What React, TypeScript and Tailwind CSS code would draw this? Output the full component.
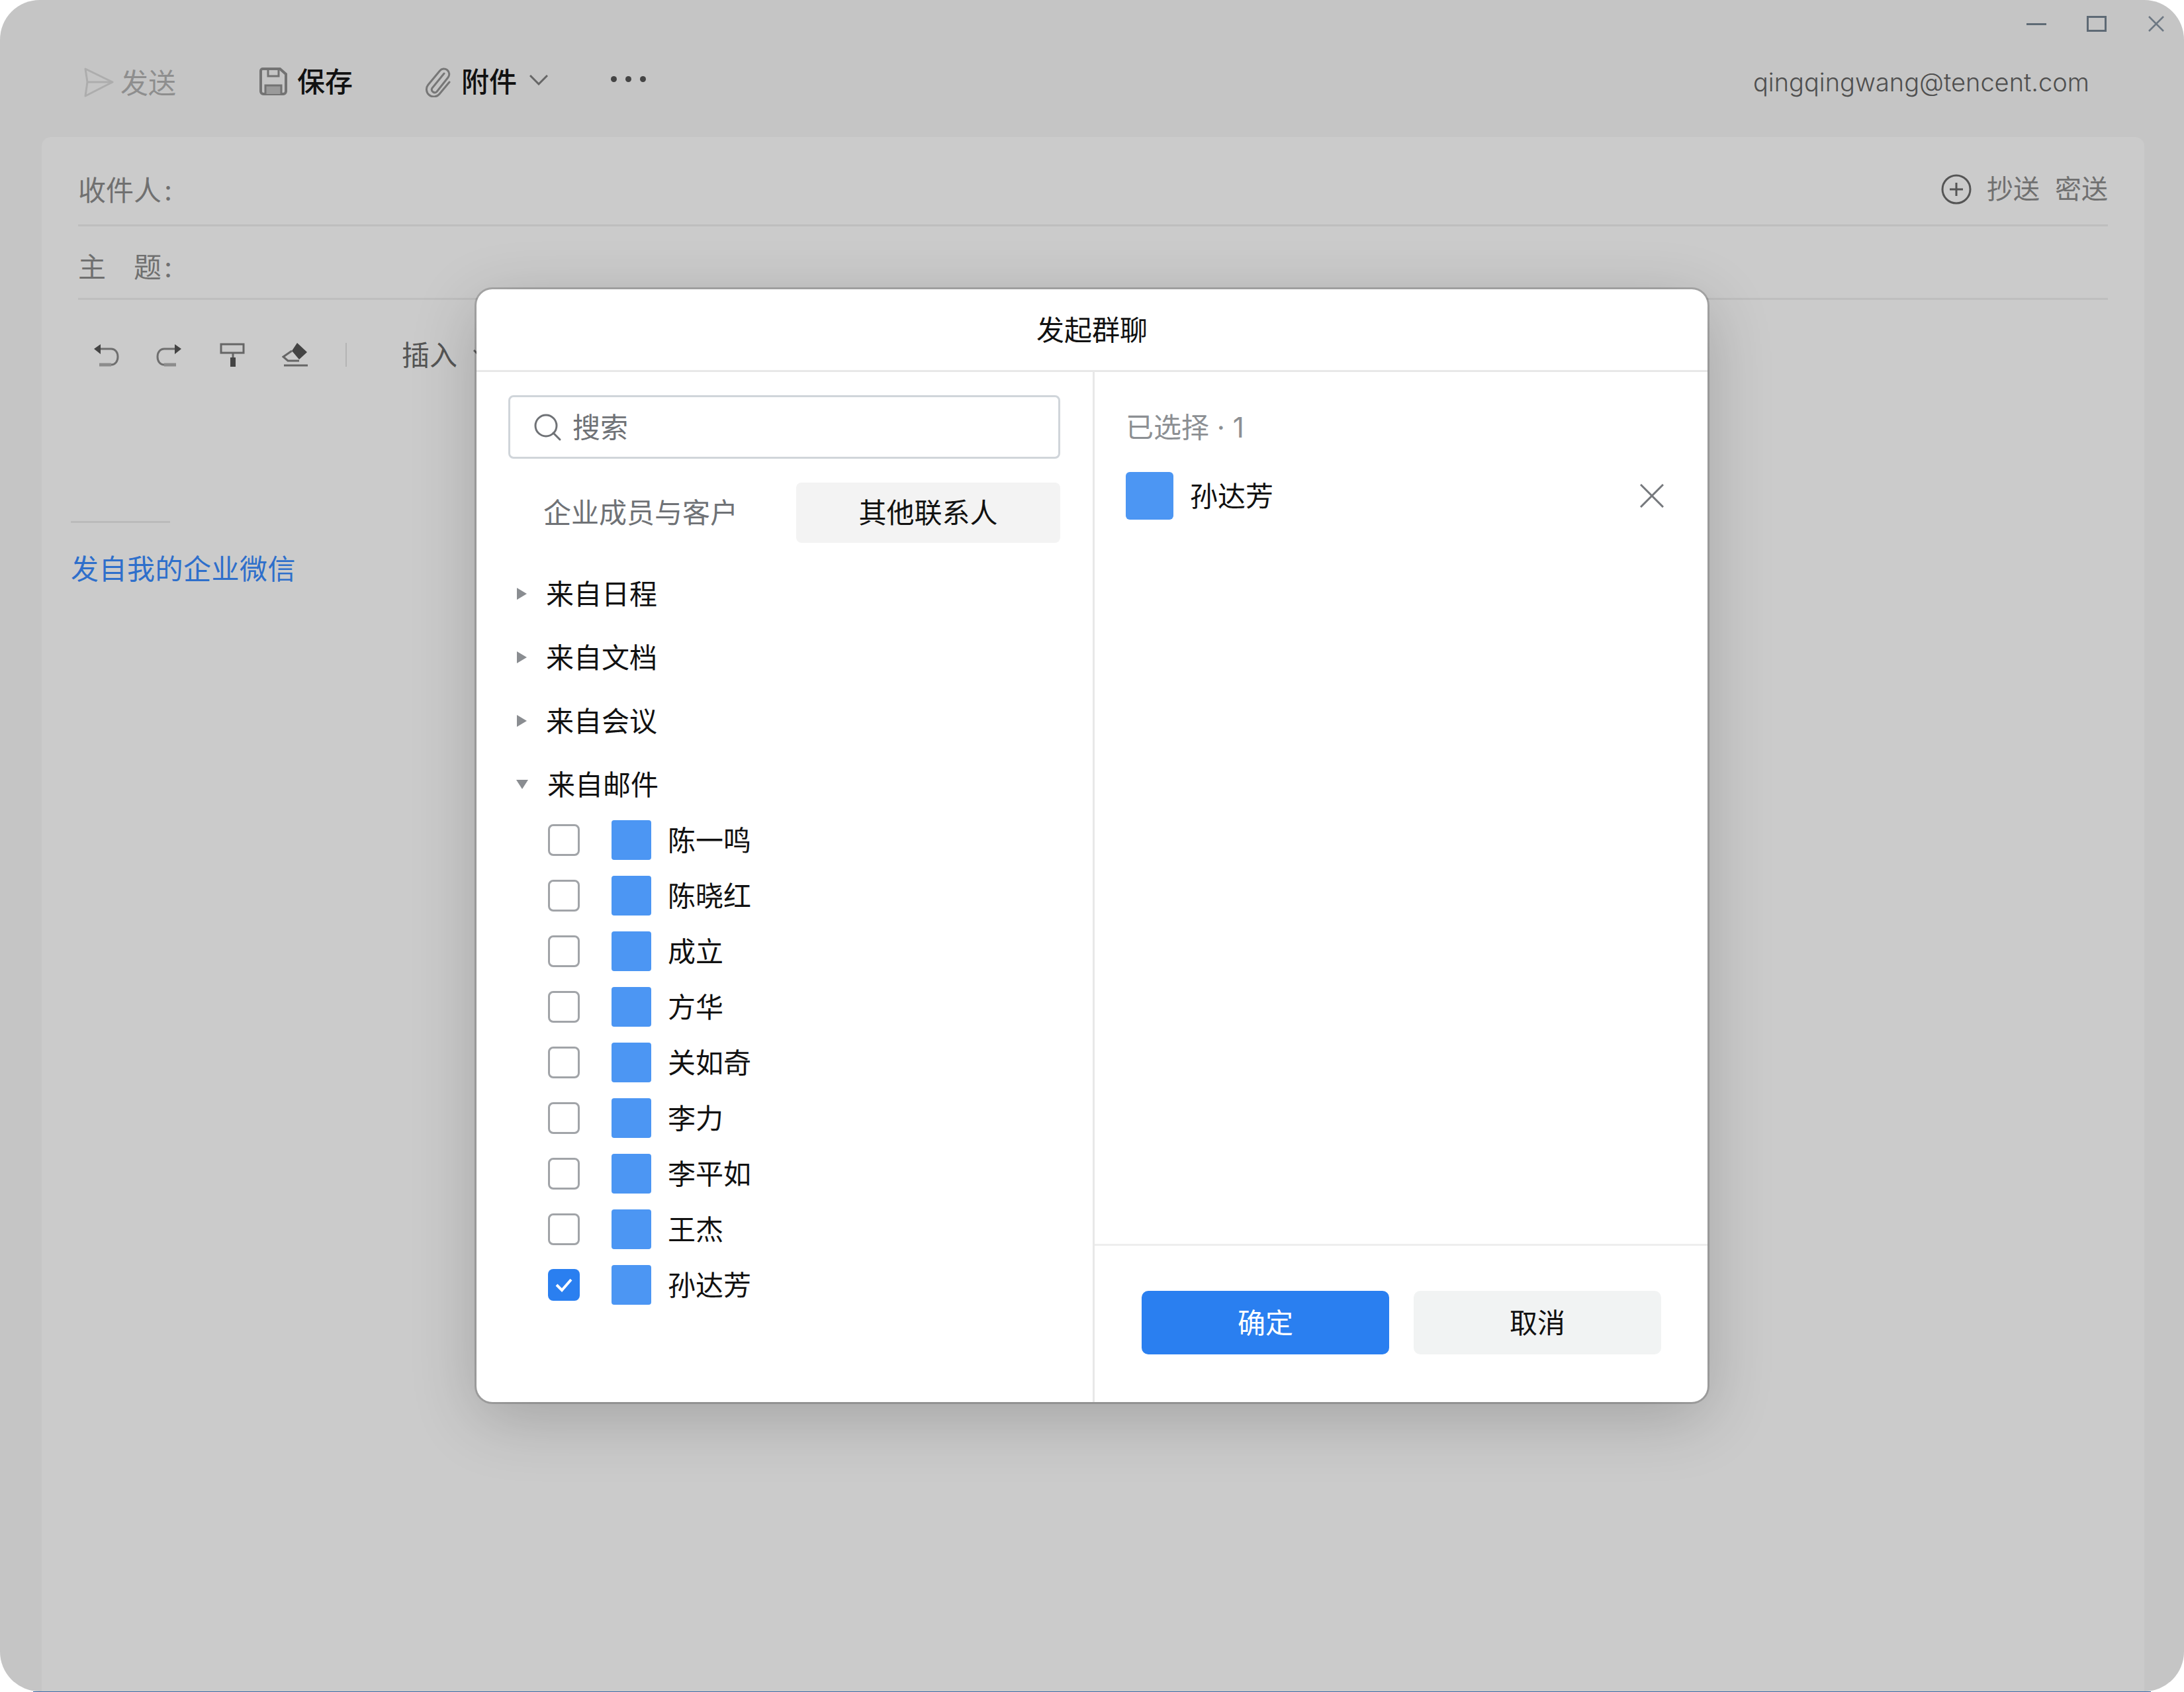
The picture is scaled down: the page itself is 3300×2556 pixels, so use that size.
const contacts = ["陈一鸣", "陈晓红", "成立", "方华", "关如奇", "李力", "李平如", "王杰", "孙达芳"];
const groups = ["来自日程", "来自文档", "来自会议"];

const SendIcon = () => (
  <svg width="46" height="46" viewBox="0 0 46 46" fill="none" stroke="#adadad" strokeWidth="3">
    <path d="M3 3 L44 23 L3 44 L6 23 Z" strokeLinejoin="round" />
    <path d="M6 23 H44" />
  </svg>
);

const SaveIcon = () => (
  <svg width="42" height="42" viewBox="0 0 42 42" fill="none" stroke="#737373" strokeWidth="4">
    <path d="M5 2 H31 L40 10 V36 a4 4 0 0 1 -4 4 H6 a4 4 0 0 1 -4 -4 V5 a3 3 0 0 1 3 -3 Z" />
    <path d="M13 2 V13 H29 V2" strokeWidth="3" />
    <path d="M9 40 V27 H33 V40" fill="#9a9a9a" strokeWidth="3" />
  </svg>
);

const ClipIcon = () => (
  <svg width="44" height="48" viewBox="0 0 44 48" fill="none" stroke="#777" strokeWidth="3" strokeLinecap="round">
    <path d="M31 12 L13 34 a4.5 4.5 0 0 0 7 5.5 L37 18 a8 8 0 0 0 -12.5 -10 L7 29 a11 11 0 0 0 17 14 L39 25" />
  </svg>
);

const Chevron = () => (
  <svg width="28" height="16" viewBox="0 0 28 16" fill="none" stroke="#666" strokeWidth="3">
    <path d="M1 1 L14 14 L27 1" />
  </svg>
);

const Undo = ({ flip }: { flip?: boolean }) => (
  <svg width="40" height="36" viewBox="0 0 40 36" fill="none" className={flip ? "-scale-x-100" : ""}>
    <path d="M12 9 H28 C34 9 38 14 38 21 C38 28 34 33 28 33" stroke="#6f6f6f" strokeWidth="3" />
    <path d="M28 33 H10" stroke="#8c8c8c" strokeWidth="5" />
    <path d="M2 9 L12 2 V17 Z" fill="#444" />
  </svg>
);

const PaintIcon = () => (
  <svg width="38" height="36" viewBox="0 0 38 36" fill="none" stroke="#666">
    <path d="M2 2 H36 V15 H2 Z" strokeWidth="3" />
    <path d="M20 15 V22" strokeWidth="3" />
    <path d="M20 22 V36" stroke="#444" strokeWidth="8" />
  </svg>
);

const EraserIcon = () => (
  <svg width="40" height="38" viewBox="0 0 40 38" fill="none">
    <path d="M15 13 L2 22 L9 28 H26" stroke="#666" strokeWidth="3" />
    <path d="M23 1 L38 15 L26 26 L15 13 Z" fill="#444" />
    <path d="M3 35 H39" stroke="#666" strokeWidth="3" />
  </svg>
);

const Box = ({ checked }: { checked?: boolean }) =>
  checked ? (
    <div className="w-[48px] h-[48px] rounded-[8px] bg-[#2a7ff0] flex items-center justify-center">
      <svg width="28" height="24" viewBox="0 0 28 24" fill="none" stroke="#fff" strokeWidth="4">
        <path d="M3 12 L11 20 L25 4" />
      </svg>
    </div>
  ) : (
    <div className="w-[48px] h-[48px] rounded-[8px] border-[3px] border-[#a1a4a8] bg-white" />
  );

export default function App() {
  return (
    <div className="relative w-[3300px] h-[2556px] overflow-hidden bg-white font-['Inter','Noto_Sans_CJK_SC',sans-serif]">
      <div className="h-[2555px] rounded-[60px] bg-[#c5c5c5] flex flex-col">
        {/* top toolbar */}
        <div className="relative h-[207px] shrink-0 flex items-start pt-[96px] pl-[126px] pr-[143px] text-[42px] leading-[52px]">
          <div className="flex items-center w-[266px] text-[#8e8e8e] gap-[10px]">
            <SendIcon />
            <span className="pt-[4px]">发送</span>
          </div>
          <div className="flex items-center w-[248px] text-[#111] gap-[15px]">
            <SaveIcon />
            <span className="pt-[2px] font-medium">保存</span>
          </div>
          <div className="flex items-center w-[283px] text-[#111] gap-[13px]">
            <ClipIcon />
            <span className="pt-[2px] font-medium">附件</span>
            <div className="-ml-[4px] -mt-[4px] pl-[10px]">
              <Chevron />
            </div>
          </div>
          <div className="flex gap-[13px] pt-[19px]">
            <span className="w-[9px] h-[9px] rounded-full bg-[#444]" />
            <span className="w-[9px] h-[9px] rounded-full bg-[#444]" />
            <span className="w-[9px] h-[9px] rounded-full bg-[#444]" />
          </div>
          <div className="ml-auto text-[#4f4f4f] text-[38px] font-light pt-[2px]">qingqingwang@tencent.com</div>
          <div className="absolute top-[24px] right-[30px] flex items-center">
            <span className="w-[30px] h-[3px] bg-[#5e6a75]" />
            <span className="ml-[61px] w-[30px] h-[24px] border-[3px] border-[#5e6a75]" />
            <svg className="ml-[63px]" width="24" height="24" viewBox="0 0 24 24" stroke="#6d7883" strokeWidth="2.5">
              <path d="M1 1 L23 23 M23 1 L1 23" />
            </svg>
          </div>
        </div>

        {/* compose panel */}
        <div className="flex-1 ml-[63px] mr-[60px] rounded-t-[14px] bg-[#cbcbcb] px-[55px] text-[42px] text-[#707070]">
          <div className="h-[135px] border-b-[3px] border-[#bebebe] flex items-center justify-between pt-[28px]">
            <span>
              收件人<span className="ml-[4px]">:</span>
            </span>
            <div className="flex items-center text-[40px] gap-[23px] -mt-[3px]">
              <svg width="46" height="46" viewBox="0 0 46 46" fill="none" stroke="#555" strokeWidth="3">
                <circle cx="23" cy="23" r="21" />
                <path d="M23 13 V33 M13 23 H33" />
              </svg>
              <span>抄送</span>
              <span>密送</span>
            </div>
          </div>
          <div className="h-[111px] border-b-[3px] border-[#bebebe] flex items-center pt-[14px] gap-[42px]">
            <span>主</span>
            <span>
              题<span className="ml-[4px]">:</span>
            </span>
          </div>
          <div className="h-[100px] flex items-center pt-[66px] gap-[56px] pl-[22px]">
            <Undo />
            <Undo flip />
            <PaintIcon />
            <EraserIcon />
            <span className="w-[2px] h-[36px] bg-[#b4b4b4]" />
            <div className="ml-[27px] flex items-center gap-[24px] text-[#555]">
              <span>插入</span>
              <Chevron />
            </div>
          </div>
          <div className="-ml-[11px] mt-[234px] w-[150px] h-[3px] bg-[#bbbbbb]" />
          <div className="-ml-[11px] mt-[38px] text-[#2e6fcb] tracking-[0.5px]">发自我的企业微信</div>
        </div>
      </div>
      <div className="absolute bottom-0 left-[50px] right-[50px] h-[1px] bg-[#3f6da8]" />

      {/* modal */}
      <div className="absolute left-[720px] top-[437px] w-[1860px] h-[1681px] rounded-[24px] bg-white overflow-hidden flex flex-col text-[42px] text-[#111] shadow-[0_0_0_3px_rgba(0,0,0,0.17),0_24px_100px_rgba(0,0,0,0.2)]">
        <div className="h-[125px] shrink-0 border-b-[3px] border-[#e8e8e8] flex items-center justify-center">发起群聊</div>
        <div className="flex-1 flex min-h-0">
          <div className="w-[934px] shrink-0 border-r-[3px] border-[#e8e8e8] pl-[48px] pr-[49px] pt-[35px]">
            <div className="h-[96px] rounded-[8px] border-[3px] border-[#d0d5da] flex items-center pl-[34px] gap-[16px] text-[#6f7276]">
              <svg width="44" height="44" viewBox="0 0 44 44" fill="none" stroke="#6f7276" strokeWidth="3" strokeLinecap="round">
                <circle cx="20" cy="20" r="16" />
                <path d="M31 31 L41 41" />
              </svg>
              <span>搜索</span>
            </div>
            <div className="mt-[36px] flex h-[91px] items-center">
              <span className="w-[435px] pl-[53px] text-[#6f7276]">企业成员与客户</span>
              <span className="flex-1 h-full rounded-[8px] bg-[#f3f3f3] flex items-center justify-center">其他联系人</span>
            </div>
            <div className="mt-[29px]">
              {groups.map((g) => (
                <div key={g} className="h-[96px] flex items-center gap-[26px] pl-[11px]">
                  <svg width="20" height="20" viewBox="0 0 20 20" fill="#8a8d91"><path d="M2 1 L17 10 L2 19 Z" /></svg>
                  <span>{g}</span>
                </div>
              ))}
              <div className="h-[96px] flex items-center gap-[28px] pl-[11px]">
                <svg width="20" height="20" viewBox="0 0 20 20" fill="#8a8d91"><path d="M1 3 L19 3 L10 17 Z" /></svg>
                <span>来自邮件</span>
              </div>
              <div className="-mt-[6px] pl-[60px]">
                {contacts.map((c, i) => (
                  <div key={c} className="h-[84px] flex items-center">
                    <Box checked={i === contacts.length - 1} />
                    <div className="ml-[48px] w-[60px] h-[60px] rounded-[4px] bg-[#4c96f3]" />
                    <span className="ml-[25px]">{c}</span>
                  </div>
                ))}
              </div>
            </div>
          </div>
          <div className="flex-1 flex flex-col">
            <div className="flex-1 pl-[47px] pr-[66px] pt-[57px] border-b-[3px] border-[#eeeeee]">
              <div className="text-[#8c8f93] leading-[54px]">已选择 · 1</div>
              <div className="mt-[40px] flex items-center">
                <div className="w-[72px] h-[72px] rounded-[6px] bg-[#4c96f3]" />
                <span className="ml-[25px]">孙达芳</span>
                <svg className="ml-auto" width="36" height="36" viewBox="0 0 36 36" stroke="#75787c" strokeWidth="3">
                  <path d="M1 1 L35 35 M35 1 L1 35" />
                </svg>
              </div>
            </div>
            <div className="h-[236px] shrink-0 flex items-start pl-[71px] pt-[68px] gap-[37px]">
              <button className="w-[374px] h-[96px] rounded-[10px] bg-[#2a7ff0] text-white">确定</button>
              <button className="w-[374px] h-[96px] rounded-[10px] bg-[#f1f3f3] text-[#111]">取消</button>
            </div>
          </div>
        </div>
      </div>
    </div>
  );
}
